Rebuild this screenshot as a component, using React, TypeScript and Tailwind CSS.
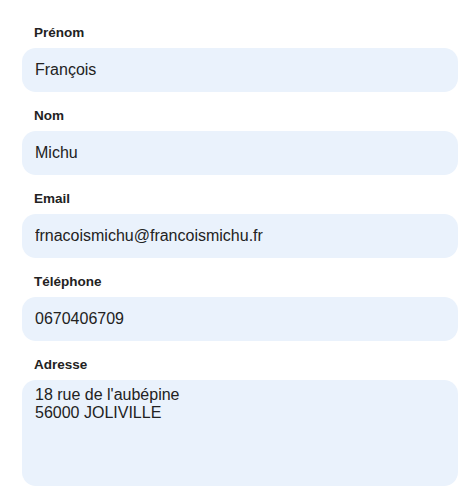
const fields = [
  { label: "Prénom", value: "François" },
  { label: "Nom", value: "Michu" },
  { label: "Email", value: "frnacoismichu@francoismichu.fr" },
  { label: "Téléphone", value: "0670406709" },
];

export default function App() {
  return (
    <div
      className="w-[475px] h-[495px] bg-white pt-[25px] pl-[22px] text-[#222]"
      style={{ fontFamily: '"Liberation Sans", Arial, sans-serif' }}
    >
      <form className="w-[436px] flex flex-col">
        {fields.map((f) => (
          <div key={f.label} className="flex flex-col mb-[16px]">
            <label className="text-[13.5px] leading-[15px] font-bold pl-[12px] mb-[8px]">
              {f.label}
            </label>
            <input
              readOnly
              defaultValue={f.value}
              className="h-[44px] rounded-[14px] bg-[#eaf2fc] px-[13px] text-[16px] text-[#222] outline-none"
            />
          </div>
        ))}
        <div className="flex flex-col">
          <label className="text-[13.5px] leading-[15px] font-bold pl-[12px] mb-[8px]">
            Adresse
          </label>
          <textarea
            readOnly
            defaultValue={"18 rue de l'aubépine\n56000 JOLIVILLE"}
            className="h-[106px] resize-none rounded-[14px] bg-[#eaf2fc] px-[13px] pt-[6px] text-[16px] leading-[18px] text-[#222] outline-none"
          />
        </div>
      </form>
    </div>
  );
}
